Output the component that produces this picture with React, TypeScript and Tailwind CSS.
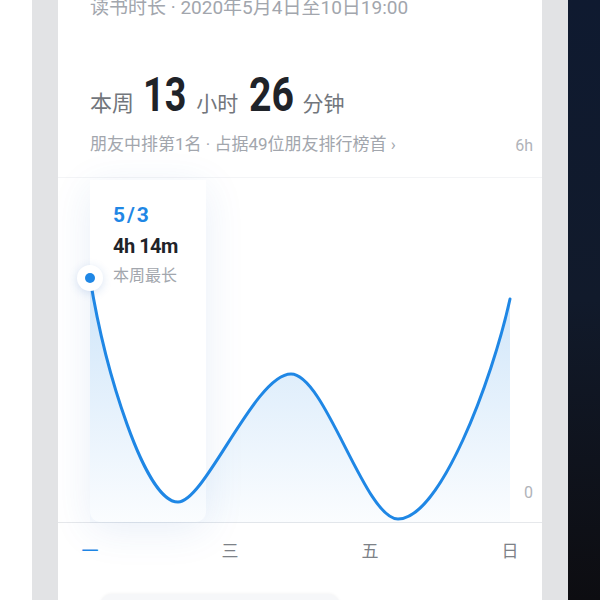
export default function App() {
  return (
    <div className="flex w-[600px] h-[600px] overflow-hidden bg-white font-['Roboto','Noto_Sans_CJK_SC',sans-serif]">
      <div className="w-[32px] shrink-0 bg-white" />
      <div className="w-[26px] shrink-0 bg-[#e2e3e5]" />

      {/* Card */}
      <div className="relative flex-1 flex flex-col bg-white overflow-hidden">
        <div className="-mt-[4px] h-[24px] shrink-0 pl-[32px] text-[19px] leading-[24px] text-[#a2a6ad] whitespace-nowrap">
          读书时长 · 2020年5月4日至10日19:00
        </div>

        <div className="mt-[51px] flex items-baseline pl-[32px] h-[48px] shrink-0">
          <span className="text-[22px] text-[#72767c]">本周</span>
          <span className="ml-[9px] -mr-[13px] inline-block origin-left scale-x-[0.77] text-[49px] leading-[48px] font-bold text-[#1f2329]">13</span>
          <span className="ml-[10px] text-[21px] text-[#72767c]">小时</span>
          <span className="ml-[11px] -mr-[12px] inline-block origin-left scale-x-[0.8] text-[49px] leading-[48px] font-bold text-[#1f2329]">26</span>
          <span className="ml-[9px] text-[21px] text-[#72767c]">分钟</span>
        </div>

        <div className="mt-[11px] flex items-end justify-between pl-[32px] pr-[9px] h-[26px] shrink-0">
          <span className="text-[17px] leading-[24px] text-[#a2a6ad] whitespace-nowrap">
            朋友中排第1名 · 占据49位朋友排行榜首 ›
          </span>
          <span className="text-[16px] leading-[20px] text-[#b0b3b9]">6h</span>
        </div>

        {/* Chart */}
        <div className="relative mt-[21px] h-[346px] shrink-0 border-t border-b border-t-[#f3f4f6] border-b-[#e6e8eb]">
          {/* Tooltip card */}
          <div className="absolute left-[32px] top-[2px] bottom-0 w-[116px] rounded-b-[10px] bg-white shadow-[0_8px_40px_rgba(40,100,190,0.10)] pl-[23px] pt-[21px]">
            <div className="text-[21px] leading-[28px] font-bold text-[#1f87e5] tracking-[2px]">5/3</div>
            <div className="mt-[3px] text-[20px] leading-[28px] font-bold text-[#1f2329] tracking-[-0.5px]">4h 14m</div>
            <div className="mt-[4px] text-[16px] leading-[24px] text-[#a2a6ad]">本周最长</div>
          </div>

          <svg className="absolute inset-0" width="484" height="345" viewBox="58 177 484 345">
            <defs>
              <linearGradient id="fill" x1="0" y1="0" x2="0" y2="1">
                <stop offset="0" stopColor="#1f87e5" stopOpacity="0.22" />
                <stop offset="1" stopColor="#1f87e5" stopOpacity="0.02" />
              </linearGradient>
            </defs>
            <path
              d="M90 277 C105 370, 145 501, 178 501 C205 501, 255 373, 291 373 C325 373, 365 518, 398 518 C440 518, 492 380, 510 298 L510 522 L90 522 Z"
              fill="url(#fill)"
            />
            <path
              d="M90 277 C105 370, 145 501, 178 501 C205 501, 255 373, 291 373 C325 373, 365 518, 398 518 C440 518, 492 380, 510 298"
              fill="none"
              stroke="#1f87e5"
              strokeWidth="3"
              strokeLinecap="round"
            />
          </svg>

          {/* Highlight dot */}
          <div className="absolute left-[19px] top-[87px] w-[26px] h-[26px] rounded-full bg-white shadow-[0_2px_10px_rgba(40,100,190,0.18)] flex items-center justify-center">
            <div className="w-[10px] h-[10px] rounded-full bg-[#1f87e5]" />
          </div>

          <span className="absolute right-[9px] bottom-[19px] text-[16px] leading-[20px] text-[#b0b3b9]">0</span>
        </div>

        <div className="flex justify-between px-[22px] pt-[17px] text-[17px] leading-[22px] shrink-0">
          <span className="w-[20px] text-center text-[#1f87e5]">一</span>
          <span className="w-[20px] text-center text-[#7d8187]">三</span>
          <span className="w-[20px] text-center text-[#7d8187]">五</span>
          <span className="w-[20px] text-center text-[#7d8187]">日</span>
        </div>

        <div className="mt-[32px] ml-[42px] w-[240px] h-[24px] shrink-0 rounded-t-[12px] bg-[#f6f7f9] shadow-[0_-1px_3px_rgba(0,0,0,0.04)]" />
      </div>

      <div className="w-[26px] shrink-0 bg-[#e2e3e5]" />
      <div className="w-[32px] shrink-0 bg-gradient-to-b from-[#0f1a30] via-[#111a2b] to-[#0d0d11]" />
    </div>
  )
}
